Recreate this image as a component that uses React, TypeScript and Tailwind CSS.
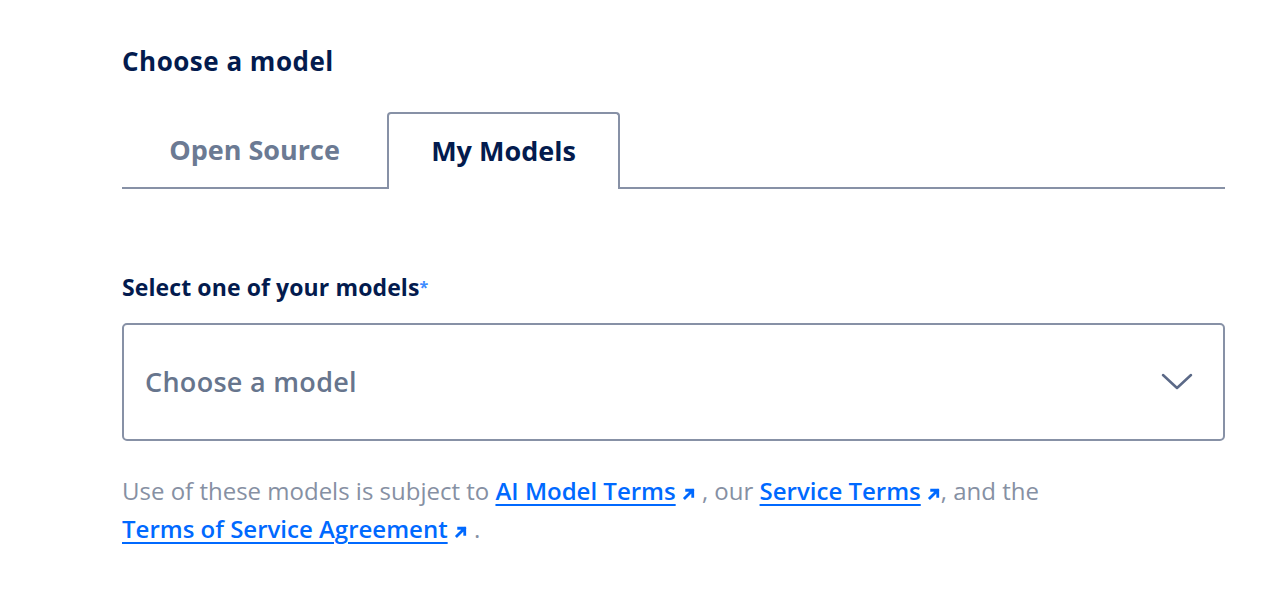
import React from "react";

const Arrow = () => (
  <svg width="14" height="14" viewBox="0 0 12 12" className="inline-block ml-[6px] align-[-1px]" fill="none">
    <path d="M2.5 9.5 L9 3 M4 2.8 H9.2 V8" stroke="#0069ff" strokeWidth="2.4" strokeLinecap="square" />
  </svg>
);

const linkCls = "text-[#0069ff] font-semibold underline underline-offset-[4px] decoration-2";

export default function App() {
  return (
    <div className="w-[1278px] h-[608px] bg-white" style={{ fontFamily: "'Open Sans', Lato, sans-serif" }}>
      <div className="pl-[122px] pr-[53px] pt-[44px]">
        <h2 className="text-[26px] font-bold text-[#031b4e] leading-[34px] tracking-[0.5px]">Choose a model</h2>
        <div className="mt-[35px] flex items-end border-b-2 border-[#8791a6] h-[76px]">
          <div className="w-[265px] h-full flex items-center justify-center text-[27px] font-bold text-[#6b7a93]">
            Open Source
          </div>
          <div className="w-[233px] h-[77px] -mb-[2px] flex items-center justify-center text-[27px] font-bold text-[#031b4e] border-2 border-b-0 border-[#8791a6] rounded-t-[4px] bg-white">
            My Models
          </div>
        </div>
        <div className="mt-[83px] text-[23px] font-bold text-[#031b4e] leading-[30px] tracking-[0.1px]">
          Select one of your models<span className="text-[#3d8bff] text-[16px] align-top">*</span>
        </div>
        <div className="mt-[21px] h-[118px] border-2 border-[#8791a6] rounded-[5px] flex items-center justify-between pl-[21px] pr-[30px]">
          <span className="text-[27px] font-semibold text-[#67758d] tracking-[0.3px]">Choose a model</span>
          <svg width="32" height="18" viewBox="0 0 32 18" fill="none">
            <path d="M2 2 L16 15 L30 2" stroke="#5b6987" strokeWidth="2.5" strokeLinecap="round" strokeLinejoin="round" />
          </svg>
        </div>
        <p className="mt-[31px] text-[24px] leading-[38px] text-[#8690a3]">
          Use of these models is subject to{" "}
          <a className={linkCls}>AI Model Terms</a>
          <Arrow /> , our{" "}
          <a className={linkCls}>Service Terms</a>
          <Arrow />, and the
          <br />
          <a className={linkCls}>Terms of Service Agreement</a>
          <Arrow /> .
        </p>
      </div>
    </div>
  );
}
